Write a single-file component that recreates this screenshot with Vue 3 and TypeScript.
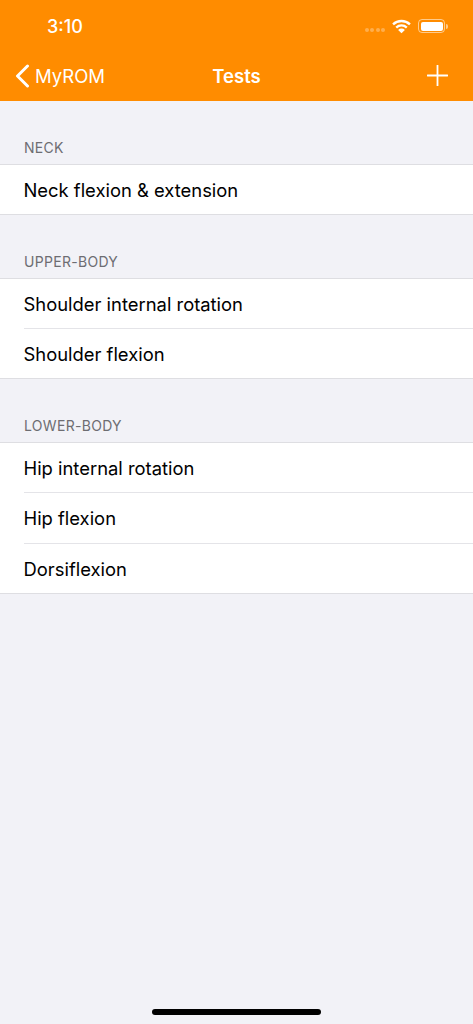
<script setup lang="ts">
const sections = [
  { title: 'NECK', rows: ['Neck flexion & extension'] },
  { title: 'UPPER-BODY', rows: ['Shoulder internal rotation', 'Shoulder flexion'] },
  { title: 'LOWER-BODY', rows: ['Hip internal rotation', 'Hip flexion', 'Dorsiflexion'] },
]
</script>

<template>
  <div class="screen">
    <header class="top">
      <div class="status">
        <span class="time">3:10</span>
        <div class="status-icons">
          <div class="signal"><i></i><i></i><i></i><i></i></div>
          <svg class="wifi" width="19" height="15" viewBox="0 0 18 14">
            <path d="M1 5 A11.5 11.5 0 0 1 17 5" fill="none" stroke="#fff" stroke-width="2.2" />
            <path d="M4 8 A7.2 7.2 0 0 1 14 8" fill="none" stroke="#fff" stroke-width="2.2" />
            <path d="M9 13.5 L5.8 10.3 A4.5 4.5 0 0 1 12.2 10.3 Z" fill="#fff" />
          </svg>
          <div class="battery"><div class="level"></div></div>
          <div class="nub"></div>
        </div>
      </div>
      <nav class="nav">
        <div class="back">
          <svg width="16" height="24" viewBox="0 0 16 24">
            <path d="M13.5 2 L3.5 12 L13.5 22" fill="none" stroke="#fff" stroke-width="3" stroke-linecap="round" stroke-linejoin="round" />
          </svg>
          <span>MyROM</span>
        </div>
        <div class="title">Tests</div>
        <svg class="plus" width="21" height="21" viewBox="0 0 21 21">
          <path d="M10.5 0.5 V20.5 M0.5 10.5 H20.5" fill="none" stroke="#fff" stroke-width="1.8" stroke-linecap="round" />
        </svg>
      </nav>
    </header>
    <main>
      <section v-for="s in sections" :key="s.title" class="section">
        <h2>{{ s.title }}</h2>
        <ul>
          <li v-for="r in s.rows" :key="r"><span>{{ r }}</span></li>
        </ul>
      </section>
    </main>
    <div class="home"></div>
  </div>
</template>

<style scoped>
.screen {
  position: relative;
  width: 473px;
  height: 1024px;
  overflow: hidden;
  background: #f2f2f7;
  font-family: Inter, "Liberation Sans", sans-serif;
  color: #000;
}
.top {
  height: 101px;
  background: #ff8c00;
  color: #fff;
}
.status {
  height: 50px;
  display: flex;
  align-items: center;
  justify-content: space-between;
  padding: 3px 25px 0 47px;
  box-sizing: border-box;
}
.time {
  font-size: 18px;
  font-weight: 500;
}
.status-icons {
  display: flex;
  align-items: center;
}
.signal {
  display: flex;
  gap: 1.5px;
  margin-right: 7px;
  margin-top: 6px;
}
.signal i {
  width: 4px;
  height: 4px;
  border-radius: 50%;
  background: rgba(255, 255, 255, 0.3);
}
.wifi {
  margin-right: 7px;
  margin-top: -1px;
}
.battery {
  width: 27px;
  height: 14px;
  box-sizing: border-box;
  border: 1px solid rgba(255, 255, 255, 0.55);
  border-radius: 4px;
  padding: 1.5px;
  margin-top: -1px;
}
.level {
  width: 100%;
  height: 100%;
  background: #fff;
  border-radius: 2px;
}
.nub {
  width: 2px;
  height: 5px;
  margin-left: 1px;
  margin-top: -1px;
  background: rgba(255, 255, 255, 0.55);
  border-radius: 0 2px 2px 0;
}
.nav {
  position: relative;
  height: 51px;
  display: flex;
  align-items: center;
  justify-content: space-between;
  padding: 0 25px 0 14px;
}
.back {
  display: flex;
  align-items: center;
  gap: 5px;
  font-size: 18.5px;
}
.title {
  position: absolute;
  left: 0;
  right: 0;
  text-align: center;
  font-size: 18.5px;
  font-weight: 600;
}
.section {
  padding-top: 36px;
}
h2 {
  margin: 0;
  padding: 1px 0 6px 24px;
  height: 27px;
  box-sizing: border-box;
  font-size: 14px;
  line-height: 20px;
  font-weight: 400;
  letter-spacing: 0.3px;
  color: #6d6d72;
}
ul {
  margin: 0;
  padding: 0;
  list-style: none;
  background: #fff;
  border-top: 1px solid #dedee2;
  border-bottom: 1px solid #dedee2;
}
li {
  height: 49px;
  padding-left: 23.5px;
  font-size: 18.4px;
  line-height: 50px;
}
li + li {
  height: 50.3px;
}
li span {
  display: block;
  height: 100%;
  box-sizing: border-box;
}
li + li span {
  border-top: 1px solid #e4e4e8;
}
.home {
  position: absolute;
  left: 152px;
  bottom: 9px;
  width: 169px;
  height: 6px;
  border-radius: 3px;
  background: #000;
}
</style>
